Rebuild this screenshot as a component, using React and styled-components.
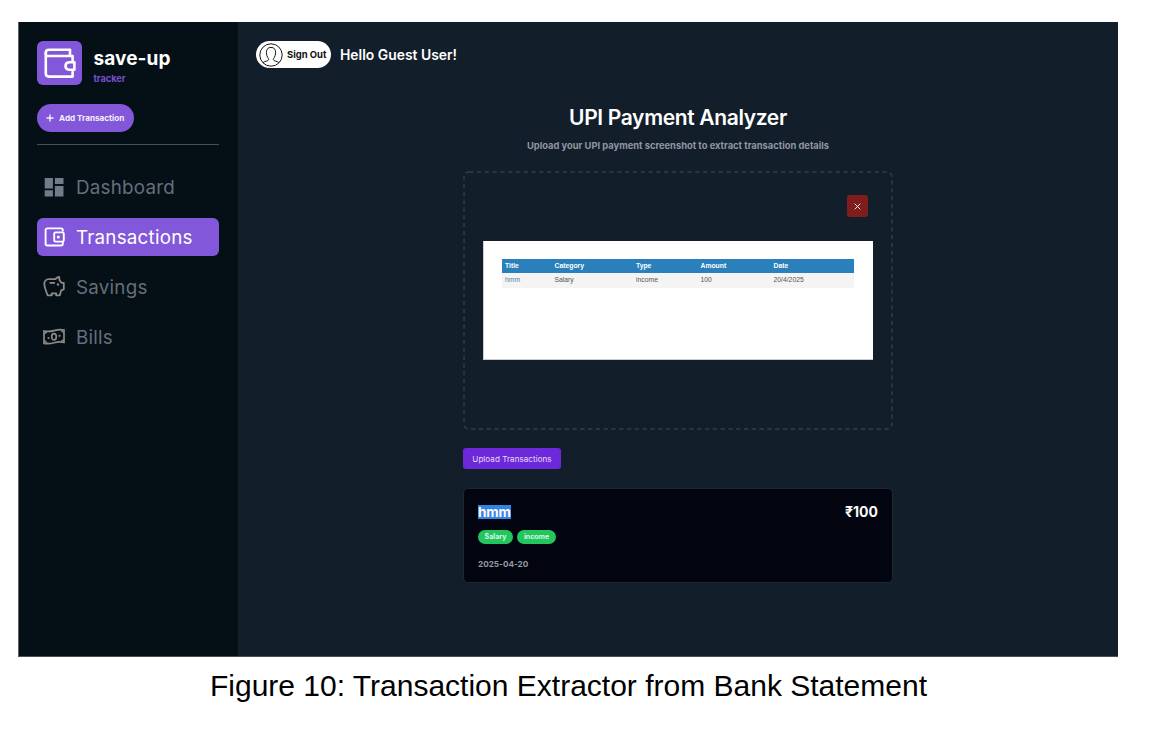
import React from "react";
import styled, { createGlobalStyle } from "styled-components";

const GlobalStyle = createGlobalStyle`
  * { box-sizing: border-box; }
  body { margin: 0; background: #fff; font-family: Inter, sans-serif; }
  h1, h2, p, figure { margin: 0; }
  button { border: 0; font-family: inherit; padding: 0; }
`;

const Figure = styled.figure`
  width: 1161px;
  height: 733px;
  padding: 22px 43px 0 18px;
  overflow: hidden;
`;
const Caption = styled.figcaption`
  margin-top: 9px;
  padding-left: 192px;
  font: 30px/40px "Liberation Sans", Arial, sans-serif;
  white-space: nowrap;
  color: #000;
`;
const Shell = styled.div`
  display: flex;
  height: 635px;
  background: #131e2b;
  border-left: 1px solid #5b6168;
  border-bottom: 1px solid #46505a;
`;
const Sidebar = styled.aside`
  width: 219px;
  flex: none;
  padding: 19px 19px 0 18px;
  background: #050f16;
`;
const Brand = styled.div`
  display: flex;
  gap: 12px;
`;
const Logo = styled.div`
  width: 44.5px;
  height: 44px;
  border-radius: 6px;
  background: #8257da;
  svg { display: block; }
`;
const BrandName = styled.div`
  padding-top: 5px;
  color: #fff;
  font-weight: 700;
  font-size: 19px;
  line-height: 25px;
  letter-spacing: 0.1px;
`;
const BrandTag = styled.div`
  color: #7a50cf;
  font-weight: 700;
  font-size: 9.2px;
  line-height: 15px;
`;
const AddButton = styled.button`
  display: flex;
  align-items: center;
  gap: 5px;
  width: 97px;
  height: 28px;
  margin-top: 18px;
  padding-left: 9px;
  border-radius: 14px;
  background: #8257da;
  color: #f4effc;
  font-size: 8.15px;
  font-weight: 700;
  white-space: nowrap;
`;
const Divider = styled.div`
  height: 1px;
  margin: 12px 0 23.5px;
  background: #46505a;
`;
const Nav = styled.nav`
  display: flex;
  flex-direction: column;
  gap: 12.4px;
`;
const NavItem = styled.div`
  display: flex;
  align-items: center;
  height: 37.5px;
  padding-left: 6px;
  border-radius: 6px;
  background: ${(p) => (p.$active ? "#8257da" : "transparent")};
  color: ${(p) => (p.$active ? "#fff" : "#656e7c")};
  font-size: 18.8px;
  line-height: 24px;
  letter-spacing: 0.23px;
`;
const NavLabel = styled.span`
  padding-top: 1.5px;
`;
const NavIcon = styled.span`
  display: grid;
  place-items: center;
  flex: none;
  width: 22px;
  height: 22px;
  margin-right: 11px;
  color: ${(p) => p.$color || "inherit"};
  svg { flex: none; }
`;

const Main = styled.main`
  flex: 1;
  padding: 19px 0 0 18px;
`;
const Header = styled.header`
  display: flex;
  align-items: center;
  gap: 9px;
  height: 27px;
`;
const SignOut = styled.button`
  display: flex;
  align-items: center;
  gap: 4px;
  width: 75px;
  height: 27px;
  padding-left: 3px;
  border-radius: 14px;
  background: #fff;
  color: #111;
  font-size: 9.45px;
  font-weight: 700;
  white-space: nowrap;
`;
const Greeting = styled.div`
  color: #fff;
  font-size: 13.9px;
  font-weight: 600;
`;
const Content = styled.section`
  width: 430px;
  margin: 34px 0 0 207px;
`;
const Title = styled.h1`
  color: #fff;
  text-align: center;
  font-size: 21px;
  font-weight: 600;
  line-height: 31px;
  letter-spacing: -0.35px;
`;
const Subtitle = styled.p`
  margin-top: 5px;
  color: #8f96a2;
  text-align: center;
  font-size: 9.35px;
  font-weight: 700;
  line-height: 15px;
`;
const DropZone = styled.div`
  height: 259px;
  margin-top: 18px;
  padding: 24px 20px 0;
  background: url("data:image/svg+xml,%3Csvg xmlns='http://www.w3.org/2000/svg' width='430' height='259'%3E%3Crect x='1' y='1' width='428' height='257' rx='5' fill='none' stroke='%23343e4a' stroke-width='1.4' stroke-dasharray='4.4 3.4'/%3E%3C/svg%3E") no-repeat;
`;
const CloseButton = styled.button`
  display: grid;
  place-items: center;
  width: 21px;
  height: 22px;
  margin-left: auto;
  margin-right: 4.6px;
  border-radius: 3px;
  background: #7f1d1d;
`;
const Statement = styled.div`
  width: 390px;
  height: 119px;
  margin-top: 24px;
  padding: 17.5px 19px 0 17.5px;
  background: #fff;
  border-left: 1px solid #c9ccd0;
  border-bottom: 1px solid #c9ccd0;
  font: 6.8px/14.5px "Liberation Sans", Arial, sans-serif;
`;
const StatementRow = styled.div`
  display: grid;
  grid-template-columns: 49.5px 81.5px 64.5px 73px 1fr;
  height: 14.5px;
  color: ${(p) => (p.$head ? "#fff" : "#555")};
  background: ${(p) => (p.$head ? "#2980ba" : "#f4f4f4")};
  font-weight: ${(p) => (p.$head ? 700 : 400)};
  span { padding-left: 3.5px; }
`;
const LinkCell = styled.span`
  color: #5a8199;
`;
const UploadButton = styled.button`
  display: block;
  width: 98px;
  height: 21px;
  margin-top: 18px;
  border-radius: 3px;
  background: #6d28d9;
  color: #e6dcfa;
  font-size: 8.1px;
  letter-spacing: 0.03px;
`;
const Card = styled.article`
  height: 95px;
  margin-top: 19px;
  padding: 14px 14px 0;
  border: 1px solid #1c2733;
  border-radius: 5px;
  background: #02050f;
`;
const CardTop = styled.div`
  display: flex;
  justify-content: space-between;
  align-items: center;
  height: 18px;
  color: #fafafa;
  font-size: 14px;
  font-weight: 700;
`;
const Selected = styled.span`
  height: 14px;
  font-size: 13.6px;
  line-height: 14px;
  letter-spacing: -0.2px;
  background: #3584e4;
`;
const Amount = styled.span`
  line-height: 16px;
`;
const Tags = styled.div`
  display: flex;
  gap: 4px;
  margin-top: 9px;
`;
const Tag = styled.span`
  width: ${(p) => p.$width}px;
  height: 13.5px;
  border-radius: 7px;
  background: #22c55e;
  color: #dcf7e6;
  text-align: center;
  font-size: 7px;
  font-weight: 700;
  line-height: 13px;
`;
const CardDate = styled.div`
  margin-top: 13px;
  color: #949aa6;
  font-size: 8.2px;
  font-weight: 700;
  line-height: 15px;
`;

const LogoIcon = () => (
  <svg width="44" height="44" fill="none" stroke="#fff" strokeWidth="2.6" strokeLinejoin="round" strokeLinecap="round">
    <path d="M8.8 12V32.5Q8.8 35.6 12 35.6H35.6V31M35.6 21V15H9" />
    <path d="M8.8 13V11.5Q8.8 8.7 12 8.7H33V14" />
    <path d="M37.4 21.3V28.7H32Q28.5 28.3 28.5 25T32 21.3Z" />
  </svg>
);
const DashboardIcon = () => (
  <svg width="22" height="22" viewBox="0 0 22 22" fill="currentColor">
    <path d="M1.7 2H9.9V12.4H1.7ZM11.9 2H20.5V7.9H11.9ZM1.7 14.3H9.9V20.5H1.7ZM11.9 10H20.5V20.5H11.9Z" />
  </svg>
);
const WalletIcon = () => (
  <svg width="22" height="22" viewBox="0 0 22 22" fill="none" stroke="currentColor" strokeWidth="1.9">
    <path d="M19.8 5.5V4.2Q19.8 2.4 18 2.4H4.4Q2.6 2.4 2.6 4.2V17.7Q2.6 19.5 4.4 19.5H18Q19.8 19.5 19.8 17.7V16" />
    <rect x="11.2" y="6.4" width="9.6" height="9.2" rx="1.4" />
    <circle cx="15.3" cy="11" r="1.5" fill="currentColor" stroke="none" />
  </svg>
);
const PiggyIcon = () => (
  <svg width="22" height="22" viewBox="0 0 22 22" fill="none" stroke="currentColor" strokeWidth="1.8" strokeLinejoin="round">
    <path d="M5.8 3.2H12.3C13.3 2 14.6 1.2 16.2 1L16.5 4.2L18.6 6.9H20.8V13.3L18.2 14.3L16.8 19.3H13.2V17.4H8.8V19.3H4.6C3.1 14.8 1.3 11.6 1.3 7.9C1.3 5.2 3.2 3.2 5.8 3.2Z" />
    <path d="M6.6 6.9H12" />
    <circle cx="15" cy="8.5" r="1.2" fill="currentColor" stroke="none" />
  </svg>
);
const BanknoteIcon = () => (
  <svg width="22" height="22" viewBox="0 0 22 22" fill="none" stroke="currentColor" strokeWidth="1.7">
    <path d="M1 5Q6 6 11 4.6T21 4V16.3Q16 15.4 11 16.8T1 17.4Z" />
    <ellipse cx="11" cy="10.8" rx="2.3" ry="3.2" />
    <path d="M1.5 7.8L4 5.6M18 4.2L20.5 6.6M1.5 14.6L4 17M18 15.5L20.5 13.7" strokeWidth="1.4" />
    <circle cx="5.5" cy="12" r="1.1" fill="currentColor" stroke="none" />
    <circle cx="16.5" cy="9.8" r="1.1" fill="currentColor" stroke="none" />
  </svg>
);
const UserIcon = () => (
  <svg width="24" height="24" viewBox="0 0 24 24" fill="none" stroke="#161616" strokeWidth="1">
    <circle cx="12" cy="12" r="11.2" />
    <path d="M4 19.6C6 17.9 9.2 18.3 9.7 16.6C9.9 15.6 7.4 13.8 7.4 9.5C7.4 6.2 9 4.4 12 4.4S16.6 6.2 16.6 9.5C16.6 13.8 14.1 15.6 14.3 16.6C14.8 18.3 18 17.9 20 19.6" />
  </svg>
);
const PlusIcon = () => (
  <svg width="8" height="8" stroke="currentColor" strokeWidth="1.4"><path d="M4 .5V7.5M.5 4H7.5" /></svg>
);
const CloseIcon = () => (
  <svg width="7" height="7" stroke="#f3e6e6" strokeWidth="1"><path d="M.7 .7L6.3 6.3M6.3 .7L.7 6.3" /></svg>
);

export default function App() {
  return (
    <Figure>
      <GlobalStyle />
      <Shell>
        <Sidebar>
          <Brand>
            <Logo><LogoIcon /></Logo>
            <div>
              <BrandName>save-up</BrandName>
              <BrandTag>tracker</BrandTag>
            </div>
          </Brand>
          <AddButton><PlusIcon />Add Transaction</AddButton>
          <Divider />
          <Nav>
            <NavItem><NavIcon $color="#727b8a"><DashboardIcon /></NavIcon><NavLabel>Dashboard</NavLabel></NavItem>
            <NavItem $active><NavIcon><WalletIcon /></NavIcon><NavLabel>Transactions</NavLabel></NavItem>
            <NavItem><NavIcon $color="#8c8986"><PiggyIcon /></NavIcon><NavLabel>Savings</NavLabel></NavItem>
            <NavItem><NavIcon $color="#8c8986"><BanknoteIcon /></NavIcon><NavLabel>Bills</NavLabel></NavItem>
          </Nav>
        </Sidebar>
        <Main>
          <Header>
            <SignOut><UserIcon />Sign Out</SignOut>
            <Greeting>Hello Guest User!</Greeting>
          </Header>
          <Content>
            <Title>UPI Payment Analyzer</Title>
            <Subtitle>Upload your UPI payment screenshot to extract transaction details</Subtitle>
            <DropZone>
              <CloseButton aria-label="Remove"><CloseIcon /></CloseButton>
              <Statement>
                <StatementRow $head>
                  <span>Title</span><span>Category</span><span>Type</span><span>Amount</span><span>Date</span>
                </StatementRow>
                <StatementRow>
                  <LinkCell>hmm</LinkCell><span>Salary</span><span>income</span><span>100</span><span>20/4/2025</span>
                </StatementRow>
              </Statement>
            </DropZone>
            <UploadButton>Upload Transactions</UploadButton>
            <Card>
              <CardTop><Selected>hmm</Selected><Amount>₹100</Amount></CardTop>
              <Tags><Tag $width={35}>Salary</Tag><Tag $width={39}>income</Tag></Tags>
              <CardDate>2025-04-20</CardDate>
            </Card>
          </Content>
        </Main>
      </Shell>
      <Caption>Figure 10: Transaction Extractor from Bank Statement</Caption>
    </Figure>
  );
}
